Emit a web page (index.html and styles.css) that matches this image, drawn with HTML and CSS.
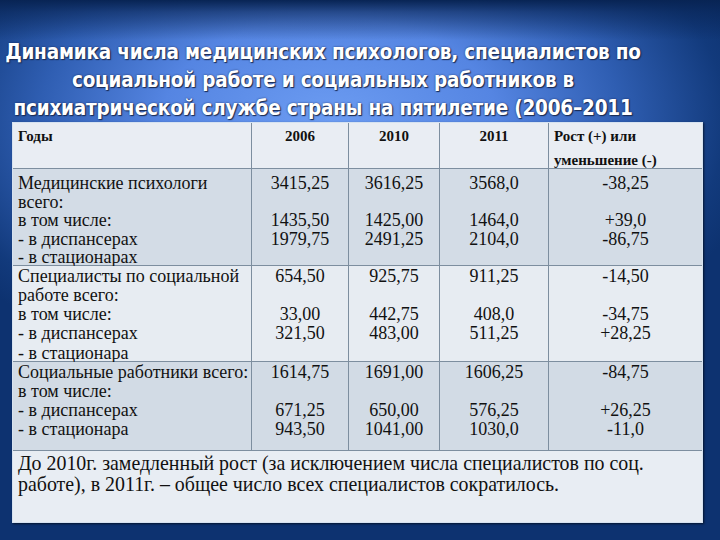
FILE: index.html
```html
<!DOCTYPE html>
<html lang="ru">
<head>
<meta charset="utf-8">
<link rel="stylesheet" href="styles.css">
</head>
<body>
<div class="slide">
  <h1 class="title">Динамика числа медицинских психологов, специалистов по<br>социальной работе и социальных работников в<br>психиатрической службе страны на пятилетие (2006–2011<br>гг.)</h1>
  <div class="data">
    <div class="cell head lbl">Годы</div>
    <div class="cell head num">2006</div>
    <div class="cell head num">2010</div>
    <div class="cell head num">2011</div>
    <div class="cell head lbl">Рост (+) или<br>уменьшение (-)</div>

    <div class="cell r1 lbl">Медицинские психологи<br>всего:<br>в том числе:<br>- в диспансерах<br>- в стационарах</div>
    <div class="cell r1 num">3415,25<br>&nbsp;<br>1435,50<br>1979,75</div>
    <div class="cell r1 num">3616,25<br>&nbsp;<br>1425,00<br>2491,25</div>
    <div class="cell r1 num">3568,0<br>&nbsp;<br>1464,0<br>2104,0</div>
    <div class="cell r1 num">-38,25<br>&nbsp;<br>+39,0<br>-86,75</div>

    <div class="cell r2 lbl">Специалисты по социальной<br>работе всего:<br>в том числе:<br>- в диспансерах<br>- в стационара</div>
    <div class="cell r2 num">654,50<br>&nbsp;<br>33,00<br>321,50</div>
    <div class="cell r2 num">925,75<br>&nbsp;<br>442,75<br>483,00</div>
    <div class="cell r2 num">911,25<br>&nbsp;<br>408,0<br>511,25</div>
    <div class="cell r2 num">-14,50<br>&nbsp;<br>-34,75<br>+28,25</div>

    <div class="cell r3 lbl">Социальные работники всего:<br>в том числе:<br>- в диспансерах<br>- в стационара</div>
    <div class="cell r3 num">1614,75<br>&nbsp;<br>671,25<br>943,50</div>
    <div class="cell r3 num">1691,00<br>&nbsp;<br>650,00<br>1041,00</div>
    <div class="cell r3 num">1606,25<br>&nbsp;<br>576,25<br>1030,0</div>
    <div class="cell r3 num">-84,75<br>&nbsp;<br>+26,25<br>-11,0</div>

    <div class="cell foot">До 2010г. замедленный рост (за исключением числа специалистов по соц.<br>работе), в 2011г. – общее число всех специалистов сократилось.</div>
  </div>
</div>
</body>
</html>
```

FILE: styles.css
```css
html, body {
  margin: 0;
  padding: 0;
}
body {
  width: 720px;
  height: 540px;
  overflow: hidden;
  background: #0d3270;
}
.slide {
  width: 720px;
  height: 540px;
  box-sizing: border-box;
  padding-top: 38px;
  background:
    linear-gradient(to bottom, rgba(8,36,84,1) 0px, rgba(8,36,84,0.6) 12px, rgba(8,36,84,0) 40px),
    radial-gradient(ellipse 440px 270px at 330px 120px, #6c9cf2 0%, #5585e2 38%, #2f5eb2 66%, #123a7c 90%, #0d3270 100%);
  background-color: #0d3270;
}
.title {
  margin: 0;
  width: 646px;
  font-family: "DejaVu Sans Condensed", "DejaVu Sans", sans-serif;
  font-weight: bold;
  font-size: 20.5px;
  line-height: 28px;
  color: #ffffff;
  text-align: center;
  white-space: nowrap;
  text-shadow: 1px 1px 1px #1a2a50, 0 0 2px rgba(0,0,40,0.6);
  letter-spacing: -0.2px;
}
.data {
  position: relative;
  z-index: 1;
  margin: -28px 0 0 12px;
  width: 691px;
  box-sizing: border-box;
  display: grid;
  grid-template-columns: 238px 96px 90px 108px 153px;
  grid-template-rows: 45px 96px 95px 88px 71px;
  gap: 1px;
  background: #7d8e9f;
  border: 1px solid #d6e2f0;
  box-shadow: 1px 1px 2px rgba(0,0,0,0.6);
  font-family: "Liberation Serif", "DejaVu Serif", serif;
  color: #111;
}
.cell {
  white-space: nowrap;
  font-size: 18px;
  padding-left: 5px;
}
.cell.num {
  text-align: center;
  padding-left: 0;
}
.head {
  background: #e9edf3;
  font-size: 15px;
  font-weight: bold;
  line-height: 24px;
  padding-top: 1px;
}
.r1 {
  background: #d3dce6;
  line-height: 18.6px;
  padding-top: 5px;
}
.r2 {
  background: #e7ecf2;
  line-height: 19.3px;
  padding-top: 0.5px;
}
.r3 {
  background: #d2dbe5;
  line-height: 19.3px;
  padding-top: 0.5px;
}
.foot {
  grid-column: 1 / -1;
  background: #e8edf3;
  font-size: 19.9px;
  line-height: 21px;
  padding-top: 1.5px;
}
```
